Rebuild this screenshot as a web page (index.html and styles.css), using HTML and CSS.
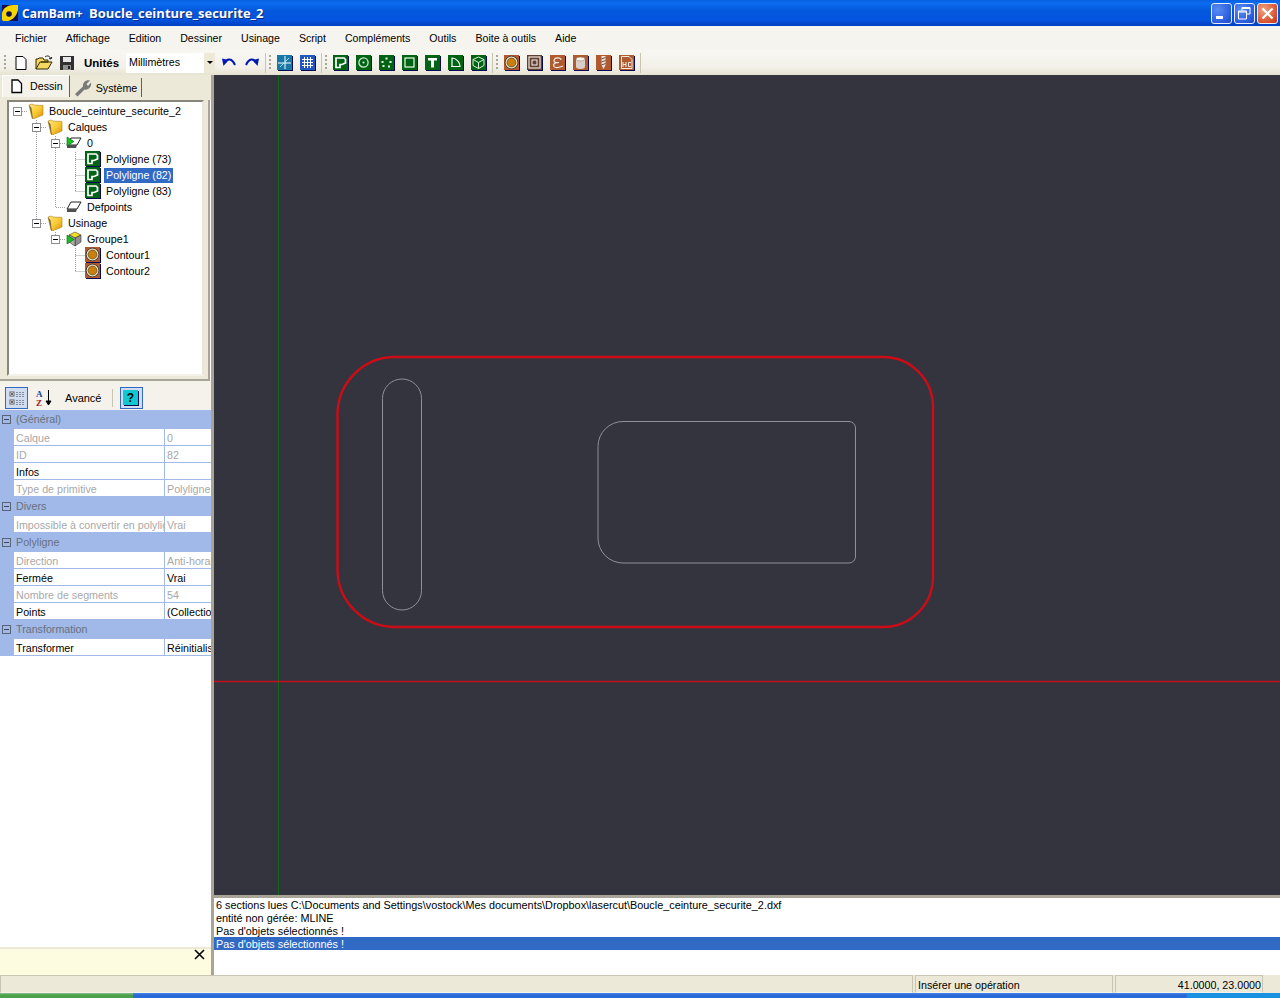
FILE: index.html
```html
<!DOCTYPE html>
<html lang="fr">
	<head>
		<title>CamBam+ Boucle_ceinture_securite_2</title>
		<meta charset="utf-8">
		<link rel="stylesheet" href="styles.css">
	</head>
	<body>
		<svg class="defs" width="0" height="0">
			<defs>
				<linearGradient id="g-folder" x1="0" y1="0" x2="1" y2="1">
					<stop offset="0" stop-color="#ffe880"/>
					<stop offset=".55" stop-color="#f8c830"/>
					<stop offset="1" stop-color="#d88a08"/>
				</linearGradient>
				<symbol id="i-folder" viewBox="0 0 16 16">
					<path d="M1 2 L4 1 L6 2 L15 2.5 V12 L5 16 L4 15 Z" fill="url(#g-folder)" stroke="#b08018" stroke-width=".6"/>
					<path d="M1 2 L4 15 L5 16 L3.5 5 Z" fill="#807040"/>
				</symbol>
				<symbol id="i-poly" viewBox="0 0 16 16">
					<rect x="0" y="0" width="15" height="15" fill="#006414"/>
					<path d="M15 1 L16 1 L16 16 L1 16 L1 15 L15 15Z" fill="#0a0a50"/>
					<path d="M3 3 H11 L12.5 4.5 V8 L9 9.5 H7 V12.5 H3Z" fill="none" stroke="#fff" stroke-width="1.7"/>
				</symbol>
				<symbol id="i-circle" viewBox="0 0 16 16">
					<rect width="15" height="15" fill="#006414"/>
					<path d="M15 1 L16 1 L16 16 L1 16 L1 15 L15 15Z" fill="#0a0a50"/>
					<circle cx="7.5" cy="7.5" r="4.6" fill="none" stroke="#cfe8cf" stroke-width="1.3"/>
					<circle cx="7.5" cy="7.5" r="1" fill="#fff"/>
				</symbol>
				<symbol id="i-points" viewBox="0 0 16 16">
					<rect width="15" height="15" fill="#006414"/>
					<path d="M15 1 L16 1 L16 16 L1 16 L1 15 L15 15Z" fill="#0a0a50"/>
					<g fill="#e8ffe8"><rect x="6.5" y="2.5" width="2" height="2"/><rect x="2.5" y="6" width="2" height="2"/><rect x="10.5" y="6" width="2" height="2"/><rect x="3.5" y="10" width="2" height="2"/><rect x="9" y="10.5" width="2" height="2"/></g>
				</symbol>
				<symbol id="i-rect" viewBox="0 0 16 16">
					<rect width="15" height="15" fill="#006414"/>
					<path d="M15 1 L16 1 L16 16 L1 16 L1 15 L15 15Z" fill="#0a0a50"/>
					<rect x="3" y="3" width="9" height="9" fill="none" stroke="#e8ffe8" stroke-width="1.2"/>
				</symbol>
				<symbol id="i-text" viewBox="0 0 16 16">
					<rect width="15" height="15" fill="#006414"/>
					<path d="M15 1 L16 1 L16 16 L1 16 L1 15 L15 15Z" fill="#0a0a50"/>
					<path d="M3 3 H12 V5.5 H9 V12.5 H6 V5.5 H3Z" fill="#fff"/>
				</symbol>
				<symbol id="i-arc" viewBox="0 0 16 16">
					<rect width="15" height="15" fill="#006414"/>
					<path d="M15 1 L16 1 L16 16 L1 16 L1 15 L15 15Z" fill="#0a0a50"/>
					<path d="M3 11.5 H12 C12 7 8 3 4 3 V11.5" fill="none" stroke="#fff" stroke-width="1.2"/>
				</symbol>
				<symbol id="i-cube" viewBox="0 0 16 16">
					<rect width="15" height="15" fill="#006414"/>
					<path d="M15 1 L16 1 L16 16 L1 16 L1 15 L15 15Z" fill="#0a0a50"/>
					<path d="M7.5 2 L13 4.5 V10.5 L7.5 13.5 L2 10.5 V4.5Z M2 4.5 L7.5 7.5 L13 4.5 M7.5 7.5 V13.5" fill="none" stroke="#d8f0d8" stroke-width="1"/>
				</symbol>
				<symbol id="i-contour" viewBox="0 0 16 16">
					<rect width="15" height="15" fill="#b05a30"/>
					<path d="M15 1 L16 1 L16 16 L1 16 L1 15 L15 15Z" fill="#0a0a50"/>
					<circle cx="7.5" cy="7.5" r="6.4" fill="#e8e0c8" stroke="#302818" stroke-width=".8"/>
					<circle cx="7.5" cy="7.5" r="4.4" fill="#c88010" stroke="#604008" stroke-width=".7"/>
				</symbol>
				<symbol id="i-pocket" viewBox="0 0 16 16">
					<rect width="15" height="15" fill="#604030"/>
					<path d="M15 1 L16 1 L16 16 L1 16 L1 15 L15 15Z" fill="#0a0a50"/>
					<rect x="2" y="2" width="11" height="11" fill="none" stroke="#f0e8e0" stroke-width="1.2"/>
					<rect x="5" y="5" width="5" height="5" fill="none" stroke="#f0e8e0" stroke-width="1.1"/>
				</symbol>
				<symbol id="i-engrave" viewBox="0 0 16 16">
					<rect width="15" height="15" fill="#b05a30"/>
					<path d="M15 1 L16 1 L16 16 L1 16 L1 15 L15 15Z" fill="#0a0a50"/>
					<path d="M11 5 C11 2 4 2 4 6 C4 8 7 7.5 9 7.5 C5 7.5 2.5 9 4 11.5 C6 14 10 12 13 11" fill="none" stroke="#f4ece0" stroke-width="1.2"/>
				</symbol>
				<symbol id="i-drum" viewBox="0 0 16 16">
					<rect width="15" height="15" fill="#b05a30"/>
					<path d="M15 1 L16 1 L16 16 L1 16 L1 15 L15 15Z" fill="#0a0a50"/>
					<path d="M3 4 V12 C3 14.5 12 14.5 12 12 V4Z" fill="#d8d0c8"/>
					<ellipse cx="7.5" cy="4" rx="4.5" ry="2" fill="#f4f0e8" stroke="#807060" stroke-width=".5"/>
				</symbol>
				<symbol id="i-drill" viewBox="0 0 16 16">
					<rect width="15" height="15" fill="#b05a30"/>
					<path d="M15 1 L16 1 L16 16 L1 16 L1 15 L15 15Z" fill="#0a0a50"/>
					<path d="M5.5 1 H9.5 V10 L7.5 14 L5.5 10Z" fill="#f0e8e0"/>
					<path d="M5.5 4 L9.5 2.5 M5.5 7 L9.5 5.5 M5.5 10 L9.5 8.5" stroke="#503020" stroke-width=".9"/>
				</symbol>
				<symbol id="i-nc" viewBox="0 0 16 16">
					<rect width="15" height="15" fill="#b05a30"/>
					<path d="M15 1 L16 1 L16 16 L1 16 L1 15 L15 15Z" fill="#0a0a50"/>
					<path d="M2.5 1.5 H10 L13 4.5 V13.5 H2.5Z" fill="none" stroke="#f4ece0"/>
					<path d="M4 7 V12 M4 9.5 H7 M7 7 V12 M12 7.5 H9.5 V11.5 H12" fill="none" stroke="#f4ece0"/>
				</symbol>
				<symbol id="i-layer" viewBox="0 0 16 16">
					<path d="M5 3 H15 L11 10 H1Z" fill="#fff" stroke="#202020"/>
					<path d="M1 10 H11 L10 13 H1Z" fill="#505050"/>
				</symbol>
			</defs>
		</svg>

		<div class="window">
			<header class="titlebar">
				<svg class="app-logo" width="16" height="16" viewBox="0 0 16 16">
					<rect width="16" height="16" fill="#10104a"/>
					<path d="M0 15 V8 C1 3 6 0 11 0 H16 V5 C15 10 11 15 6 16 H1Z" fill="#f6d400"/>
					<circle cx="7" cy="9" r="2.8" fill="#10104a"/>
				</svg>
				<span class="app-name">CamBam+</span>
				<span class="doc-name">Boucle_ceinture_securite_2</span>
				<div class="win-buttons">
					<button class="win-btn">
						<svg width="19" height="19" viewBox="0 0 19 19"><rect x="4" y="12" width="7" height="3" fill="#fff"/></svg>
					</button>
					<button class="win-btn">
						<svg width="19" height="19" viewBox="0 0 19 19"><path d="M7 6.5 V3.5 H15 V10 H12 M3.5 7 H11.5 V15 H3.5Z M3.5 8 H11.5 M7 4.5 H15" fill="none" stroke="#fff"/></svg>
					</button>
					<button class="win-btn win-close">
						<svg width="19" height="19" viewBox="0 0 19 19"><path d="M4.5 4.5 L14.5 14.5 M14.5 4.5 L4.5 14.5" stroke="#fff" stroke-width="2.2"/></svg>
					</button>
				</div>
			</header>

			<nav class="menubar">
				<span>Fichier</span>
				<span>Affichage</span>
				<span>Edition</span>
				<span>Dessiner</span>
				<span>Usinage</span>
				<span>Script</span>
				<span>Compléments</span>
				<span>Outils</span>
				<span>Boite à outils</span>
				<span>Aide</span>
			</nav>

			<div class="toolbar">
				<i class="grip"></i>
				<span class="tool">
					<svg width="16" height="16" viewBox="0 0 16 16"><path d="M3 1.5 H10 L13 4.5 V14.5 H3Z" fill="#fff" stroke="#000"/></svg>
				</span>
				<span class="tool">
					<svg width="18" height="16" viewBox="0 0 18 16"><path d="M1 14 V4 H3 L4 3 H8 L9 5 H13 V7 H5 L1 14 L4 14 H13 L17 7 H6" fill="#f4d860" stroke="#302800"/><path d="M10 2 C12 0 15 1 16 4 M16 4 L14 3.5 M16 4 L16.8 2" fill="none" stroke="#202020"/></svg>
				</span>
				<span class="tool">
					<svg width="16" height="16" viewBox="0 0 16 16"><path d="M1 1 H15 V15 H1Z" fill="#303030"/><rect x="4" y="2" width="8" height="5" fill="#e8e8e8"/><rect x="4" y="10" width="8" height="5" fill="#909090"/><rect x="9" y="11" width="2" height="3" fill="#202020"/></svg>
				</span>
				<span class="tb-label">Unités</span>
				<div class="combo">
					<span class="combo-text">Millimètres</span>
					<span class="combo-arrow"></span>
				</div>
				<span class="tool">
					<svg width="16" height="16" viewBox="0 0 16 16"><path d="M4 8 C6 3 11 3 14 10" fill="none" stroke="#0018b0" stroke-width="2"/><path d="M1 3.5 L7.5 5 L2.5 11Z" fill="#0018b0"/></svg>
				</span>
				<span class="tool">
					<svg width="16" height="16" viewBox="0 0 16 16"><path d="M12 8 C10 3 5 3 2 10" fill="none" stroke="#0018b0" stroke-width="2"/><path d="M15 3.5 L8.5 5 L13.5 11Z" fill="#0018b0"/></svg>
				</span>
				<i class="sep"></i>
				<i class="grip"></i>
				<span class="tool">
					<svg width="16" height="16" viewBox="0 0 16 16"><rect width="15" height="15" fill="#1878a8"/><path d="M15 1 H16 V16 H1 V15 H15Z" fill="#0a0a50"/><path d="M8 1 V14 M1 8 H14" stroke="#fff"/><path d="M3 12 L12 3" stroke="#a0e0f0"/></svg>
				</span>
				<span class="tool">
					<svg width="16" height="16" viewBox="0 0 16 16"><rect width="15" height="15" fill="#2058c0"/><path d="M15 1 H16 V16 H1 V15 H15Z" fill="#0a0a50"/><path d="M2 4.5 H13 M2 7.5 H13 M2 10.5 H13 M4.5 2 V13 M7.5 2 V13 M10.5 2 V13" stroke="#fff"/></svg>
				</span>
				<i class="sep"></i>
				<i class="grip"></i>
				<span class="tool"><svg width="16" height="16"><use href="#i-poly"/></svg></span>
				<span class="tool"><svg width="16" height="16"><use href="#i-circle"/></svg></span>
				<span class="tool"><svg width="16" height="16"><use href="#i-points"/></svg></span>
				<span class="tool"><svg width="16" height="16"><use href="#i-rect"/></svg></span>
				<span class="tool"><svg width="16" height="16"><use href="#i-text"/></svg></span>
				<span class="tool"><svg width="16" height="16"><use href="#i-arc"/></svg></span>
				<span class="tool"><svg width="16" height="16"><use href="#i-cube"/></svg></span>
				<i class="sep"></i>
				<i class="grip"></i>
				<span class="tool"><svg width="16" height="16"><use href="#i-contour"/></svg></span>
				<span class="tool"><svg width="16" height="16"><use href="#i-pocket"/></svg></span>
				<span class="tool"><svg width="16" height="16"><use href="#i-engrave"/></svg></span>
				<span class="tool"><svg width="16" height="16"><use href="#i-drum"/></svg></span>
				<span class="tool"><svg width="16" height="16"><use href="#i-drill"/></svg></span>
				<span class="tool"><svg width="16" height="16"><use href="#i-nc"/></svg></span>
				<i class="sep"></i>
			</div>

			<div class="main">
				<aside class="side">
					<div class="tabs">
						<div class="tab tab-active">
							<svg width="14" height="16" viewBox="0 0 14 16"><path d="M3 2 H9 L12.5 5.5 V14.5 H3Z" fill="#fff" stroke="#000" stroke-width="1.3"/></svg>
							<span>Dessin</span>
						</div>
						<div class="tab">
							<svg width="18" height="18" viewBox="0 0 18 18"><path d="M1 15 L9 7.5 C8.5 3.5 12 .5 16 1.5 L12.5 5 L14 7 L17 3.5 C18 8 14 11.5 10.5 10.5 L3.5 17.5Z" fill="#7a7a7a"/></svg>
							<span>Système</span>
						</div>
					</div>

					<div class="tree-panel">
						<div class="tree">
							<svg class="tree-lines" width="190" height="180">
								<path d="M13 9.5 H19 M27.5 18 V121.5 M32 25.5 H38 M32 121.5 H38 M46.5 34 V105.5 H57 M51 41.5 H57 M66.5 50 V89.5 M66.5 57.5 H76 M66.5 73.5 H76 M66.5 89.5 H76 M46.5 130 V137 M51 137.5 H57 M66.5 146 V169.5 M66.5 153.5 H76 M66.5 169.5 H76" fill="none" stroke="#a0a0a0" stroke-dasharray="1 1"/>
							</svg>
							<div class="node lvl0"><i class="box"></i><svg width="16" height="16"><use href="#i-folder"/></svg><span>Boucle_ceinture_securite_2</span></div>
							<div class="node lvl1"><i class="box"></i><svg width="16" height="16"><use href="#i-folder"/></svg><span>Calques</span></div>
							<div class="node lvl2"><i class="box"></i>
								<svg width="16" height="16" viewBox="0 0 16 16"><use href="#i-layer"/><path d="M1 2 L8 6.5 L1 11Z" fill="#18c020" stroke="#006010" stroke-width=".6"/></svg>
								<span>0</span></div>
							<div class="node lvl3"><svg width="16" height="16"><use href="#i-poly"/></svg><span>Polyligne (73)</span></div>
							<div class="node lvl3"><svg width="16" height="16"><use href="#i-poly"/></svg><span class="selected">Polyligne (82)</span></div>
							<div class="node lvl3"><svg width="16" height="16"><use href="#i-poly"/></svg><span>Polyligne (83)</span></div>
							<div class="node lvl2 no-box"><svg width="16" height="16"><use href="#i-layer"/></svg><span>Defpoints</span></div>
							<div class="node lvl1"><i class="box"></i><svg width="16" height="16"><use href="#i-folder"/></svg><span>Usinage</span></div>
							<div class="node lvl2"><i class="box"></i>
								<svg width="16" height="16" viewBox="0 0 16 16"><path d="M9 1 L15 4 L9 7 L3 4Z" fill="#f0e020" stroke="#404020" stroke-width=".6"/><path d="M9 7 L15 4 V11 L9 15Z" fill="#909090" stroke="#303030" stroke-width=".6"/><path d="M3 4 L9 7 V15 L3 11Z" fill="#b0b0b0" stroke="#303030" stroke-width=".6"/><path d="M1 4 L8 8.5 L1 13Z" fill="#18c020" stroke="#006010" stroke-width=".6"/></svg>
								<span>Groupe1</span></div>
							<div class="node lvl3"><svg width="16" height="16"><use href="#i-contour"/></svg><span>Contour1</span></div>
							<div class="node lvl3"><svg width="16" height="16"><use href="#i-contour"/></svg><span>Contour2</span></div>
						</div>
					</div>

					<div class="hsplit"></div>

					<div class="grid-tools">
						<span class="gtool gtool-on">
							<svg width="18" height="18" viewBox="0 0 18 18"><g fill="#fff" stroke="#606060"><rect x="2" y="3" width="4" height="4"/><rect x="2" y="11" width="4" height="4"/></g><path d="M3 5 H5 M4 4 V6 M3 13 H5 M4 12 V14" stroke="#000" stroke-width=".7"/><path d="M8 3.5 H16 M8 5.5 H16 M8 7.5 H16 M8 11.5 H16 M8 13.5 H16 M8 15.5 H16" stroke="#8090a0" stroke-dasharray="2 1"/></svg>
						</span>
						<span class="gtool">
							<svg width="18" height="20" viewBox="0 0 18 20"><text x="1" y="9" class="az az-a">A</text><text x="1" y="18" class="az az-z">Z</text><path d="M13.5 2 V16 M11 13 L13.5 17 L16 13Z" stroke="#000" fill="#000"/></svg>
						</span>
						<span class="gtool-label">Avancé</span>
						<i class="gsep"></i>
						<span class="gtool gtool-on gtool-help">
							<svg width="16" height="16" viewBox="0 0 16 16"><rect width="15" height="15" fill="#10c8d0"/><path d="M15 1 H16 V16 H1 V15 H15Z" fill="#0a0a50"/><text x="7.5" y="12" class="qmark">?</text></svg>
						</span>
					</div>

					<div class="props">
						<div class="cat"><i class="box"></i>(Général)</div>
						<div class="prop off"><span>Calque</span><span>0</span></div>
						<div class="prop off"><span>ID</span><span>82</span></div>
						<div class="prop"><span>Infos</span><span></span></div>
						<div class="prop off"><span>Type de primitive</span><span>Polyligne</span></div>
						<div class="cat"><i class="box"></i>Divers</div>
						<div class="prop off"><span>Impossible à convertir en polyligne</span><span>Vrai</span></div>
						<div class="cat"><i class="box"></i>Polyligne</div>
						<div class="prop off"><span>Direction</span><span>Anti-horaire</span></div>
						<div class="prop"><span>Fermée</span><span>Vrai</span></div>
						<div class="prop off"><span>Nombre de segments</span><span>54</span></div>
						<div class="prop"><span>Points</span><span>(Collection)</span></div>
						<div class="cat"><i class="box"></i>Transformation</div>
						<div class="prop"><span>Transformer</span><span>Réinitialiser</span></div>
					</div>

					<div class="hint">
						<svg width="11" height="11" viewBox="0 0 11 11"><path d="M1 1 L10 10 M10 1 L1 10" stroke="#000" stroke-width="1.6"/></svg>
					</div>
				</aside>

				<div class="content">
					<div class="canvas">
						<svg class="drawing" width="1066" height="820" viewBox="214 75 1066 820">
							<path d="M278.5 75 V895" stroke="#0e6a18" fill="none"/>
							<path d="M214 681.5 H1280" stroke="#c0121c" stroke-width="1.6" fill="none"/>
							<path d="M395 357 H883 A50 50 0 0 1 933 407 V577 A50 50 0 0 1 883 627 H395 A57.5 57.5 0 0 1 337.5 569.5 V414.5 A57.5 57.5 0 0 1 395 357Z" fill="none" stroke="#cc0c16" stroke-width="2.4"/>
							<rect x="382.5" y="379" width="39" height="231" rx="19.5" fill="none" stroke="#90909a"/>
							<path d="M623 421.5 H849 A6.5 6.5 0 0 1 855.5 428 V556 A6.5 6.5 0 0 1 849 563 H623 A25 25 0 0 1 598 538 V446.5 A25 25 0 0 1 623 421.5Z" fill="none" stroke="#90909a"/>
						</svg>
					</div>
					<div class="log">
						<div>6 sections lues C:\Documents and Settings\vostock\Mes documents\Dropbox\lasercut\Boucle_ceinture_securite_2.dxf</div>
						<div>entité non gérée: MLINE</div>
						<div>Pas d'objets sélectionnés !</div>
						<div class="log-sel">Pas d'objets sélectionnés !</div>
					</div>
				</div>
			</div>

			<footer class="statusbar">
				<div class="st st-main"></div>
				<div class="st st-op">Insérer une opération</div>
				<div class="st st-pos">41.0000, 23.0000</div>
			</footer>
			<div class="taskbar">
				<div class="task-start"></div>
				<div class="task-tray"></div>
			</div>
		</div>
	</body>
</html>
```

FILE: styles.css
```css
html, body {
	height: 100%;
}
body {
	margin: 0;
	overflow: hidden;
	background-color: #ece9d8;
	color: #000000;
	font-family: "Liberation Sans", Arial, sans-serif;
	font-size: 10.7px;
}
.defs { position: absolute; }
i { display: block; }

.window {
	display: flex;
	flex-direction: column;
	height: 998px;
}

/* title bar */
.titlebar {
	flex: 0 0 26px;
	display: flex;
	align-items: center;
	padding: 0 2px 0 2px;
	background: linear-gradient(#0a5fe0 0, #0a6cf0 12%, #0458dc 40%, #0454e0 75%, #0240c0 100%);
	color: #ffffff;
	font-family: "Open Sans", sans-serif;
	font-size: 12px;
	font-weight: bold;
	text-shadow: 1px 1px #0a2a80;
}
.app-logo { flex: none; }
.app-name { flex: 0 0 67px; margin-left: 4px; }
.doc-name { font-size: 13px; }
.win-buttons {
	display: flex;
	gap: 2px;
	margin-left: auto;
}
.win-btn {
	width: 21px;
	height: 21px;
	padding: 0;
	border: 1px solid #e8eeff;
	border-radius: 3px;
	background: radial-gradient(circle at 30% 30%, #5a8cf0, #2a5ce0 70%, #1c44c0);
}
.win-btn svg { display: block; }
.win-close { background: radial-gradient(circle at 30% 30%, #f0a080, #d8532c 70%, #b83a18); }

/* menu */
.menubar {
	flex: 0 0 24px;
	display: flex;
	align-items: center;
	gap: 19px;
	padding-left: 15px;
	background-color: #f6f4ee;
	font-size: 10.6px;
}

.toolbar {
	flex: 0 0 25px;
	display: flex;
	align-items: center;
	padding-left: 4px;
	background: linear-gradient(#f8f7f2, #f2f0e8 70%, #e6e3d2);
}
.grip {
	flex: none;
	width: 2px;
	height: 15px;
	margin-right: 2px;
	background: repeating-linear-gradient(#a8a69a 0 2px, transparent 2px 4px);
}
.grip:first-child { margin-right: 3px; }
.sep {
	flex: none;
	width: 1px;
	height: 20px;
	margin: 0 3px 0 2px;
	background-color: #c8c5b2;
}
.tool {
	flex: 0 0 23px;
	display: flex;
	justify-content: center;
	align-items: center;
}
.tb-label {
	flex: 0 0 36px;
	margin-left: 6px;
	font-weight: bold;
	font-size: 11.5px;
}
.combo {
	flex: none;
	display: flex;
	width: 89px;
	height: 20px;
	margin: 0 2px 0 6px;
	background-color: #ffffff;
}
.combo-text {
	flex: 1;
	padding: 3px 0 0 3px;
}
.combo-arrow {
	flex: 0 0 11px;
	display: flex;
	justify-content: center;
	align-items: center;
	background-color: #ece9d8;
}
.combo-arrow::after {
	content: "";
	border: 3px solid transparent;
	border-top: 3px solid #000000;
	border-bottom: 0;
}

/* main area */
.main {
	flex: 1;
	display: flex;
	min-height: 0;
}
.side {
	flex: 0 0 214px;
	display: flex;
	flex-direction: column;
	box-sizing: border-box;
	border-right: 3px solid #a8a598;
	background-color: #ffffff;
	overflow: hidden;
}

.tabs {
	flex: 0 0 25px;
	display: flex;
	align-items: flex-start;
	padding-left: 2px;
	background-color: #ece9d8;
}
.tab {
	flex: none;
	display: flex;
	align-items: center;
	gap: 4px;
	box-sizing: border-box;
	height: 19px;
	margin-top: 3px;
	padding: 0 4px 0 4px;
	border-right: 1px solid #606060;
	background-color: #ece9d8;
}
.tab-active {
	gap: 7px;
	height: 22px;
	margin-top: 0;
	padding: 0 6px 1px 6px;
	border-left: 1px solid #ffffff;
	border-top: 1px solid #ffffff;
	background-color: #f4f2ea;
}

.tree-panel {
	flex: 0 0 281px;
	box-sizing: border-box;
	width: 210px;
	padding-bottom: 3px;
	border-right: 2px solid #a8a598;
	border-bottom: 2px solid #a8a598;
	background-color: #ece9d8;
}
.tree {
	position: relative;
	box-sizing: border-box;
	height: 276px;
	margin: 0 4px 0 7px;
	padding-top: 1px;
	border: 2px solid #88867c;
	border-right-color: #e8e6dc;
	border-bottom-color: #f4f2ea;
	background-color: #ffffff;
}
.tree-lines {
	position: absolute;
	left: 0;
	top: 0;
}
.node {
	position: relative;
	display: flex;
	align-items: center;
	height: 16px;
}
.node span { margin-left: 3px; padding: 0 2px; line-height: 15px; white-space: nowrap; }
.box {
	flex: none;
	box-sizing: border-box;
	width: 9px;
	height: 9px;
	border: 1px solid #8c8c8c;
	background: linear-gradient(#000, #000) center / 5px 1px no-repeat, #ffffff;
}
.node .box { margin-right: 6px; }
.lvl0 { padding-left: 4px; }
.lvl1 { padding-left: 23px; }
.lvl2 { padding-left: 42px; }
.lvl2.no-box { padding-left: 57px; }
.lvl3 { padding-left: 76px; }
.selected {
	background-color: #316ac5;
	color: #ffffff;
}

.hsplit {
	flex: 0 0 4px;
	background-color: #f4f2ea;
}
.grid-tools {
	flex: 0 0 25px;
	display: flex;
	align-items: center;
	padding-left: 5px;
	background-color: #f4f2ea;
	font-size: 11px;
}
.gtool {
	flex: none;
	display: flex;
	justify-content: center;
	align-items: center;
	box-sizing: border-box;
	width: 23px;
	height: 22px;
}
.gtool + .gtool { margin-left: 4px; }
.gtool-on {
	border: 1px solid #316ac5;
	background-color: #d0dcf0;
}
.gtool-label { margin-left: 10px; }
.gsep {
	width: 1px;
	height: 18px;
	margin: 0 7px 0 10px;
	background-color: #c8c5b2;
}
.az { font-size: 9px; font-weight: bold; font-family: "Liberation Serif", serif; }
.az-a { fill: #2040a0; }
.az-z { fill: #a02020; }
.qmark { font-size: 12px; font-weight: bold; text-anchor: middle; fill: #000; }

/* property grid */
.props {
	flex: 0 0 247px;
	background-color: #ffffff;
}
.cat {
	display: flex;
	align-items: center;
	gap: 5px;
	box-sizing: border-box;
	height: 19px;
	padding: 0 0 1px 2px;
	background-color: #a0b9e8;
	color: #68707e;
}
.cat .box {
	border-color: #5a6478;
	background: linear-gradient(#404858, #404858) center / 5px 1px no-repeat, transparent;
}
.prop {
	position: relative;
	display: grid;
	grid-template-columns: 150px 1fr;
	grid-template-rows: 16px;
	box-sizing: border-box;
	height: 17px;
	margin-left: 14px;
	border-bottom: 1px solid #a0b9e8;
	line-height: 17px;
	white-space: nowrap;
}
.prop::before {
	content: "";
	position: absolute;
	left: -14px;
	top: -1px;
	bottom: -1px;
	width: 14px;
	background-color: #a0b9e8;
}
.prop span { overflow: hidden; box-sizing: border-box; padding: 1px 0 0 2px; }
.prop span + span { border-left: 1px solid #a0b9e8; }
.off { color: #a8a8a8; }

.hint {
	margin-top: auto;
	flex: 0 0 28px;
	display: flex;
	justify-content: flex-end;
	padding: 2px 6px 0 0;
	box-sizing: border-box;
	background: linear-gradient(#ece9d8 0 2px, #fdfbe0 2px);
}

.content {
	flex: 1;
	display: flex;
	flex-direction: column;
	min-width: 0;
}
.canvas {
	flex: 0 0 820px;
	background-color: #34343e;
}
.drawing { display: block; }
.log {
	flex: 1;
	box-sizing: border-box;
	border-top: 3px solid #a8a598;
	background-color: #ffffff;
	font-size: 10.85px;
}
.log div {
	height: 13px;
	line-height: 15px;
	padding-left: 2px;
	white-space: nowrap;
}
.log .log-sel {
	background-color: #316ac5;
	color: #ffffff;
}

.statusbar {
	flex: 0 0 18px;
	min-height: 0;
	display: flex;
	gap: 2px;
	box-sizing: border-box;
	overflow: hidden;
	background-color: #ece9d8;
	line-height: 19px;
}
.st {
	box-sizing: border-box;
	border: 1px solid #c8c5b2;
	border-bottom-color: #f4f2ea;
	padding-left: 2px;
}
.st-main { flex: 0 0 913px; }
.st-op { flex: 0 0 198px; }
.st-pos { flex: 0 0 148px; padding-right: 1px; text-align: right; }
.taskbar {
	flex: 0 0 5px;
	display: flex;
	background: linear-gradient(#4a88e4, #2a6ad8 40%);
}
.task-start { width: 133px; background: linear-gradient(#8fc08f, #4ba04b 40%); }
.task-tray { width: 93px; margin-left: auto; background-color: #1a90e0; }
```
